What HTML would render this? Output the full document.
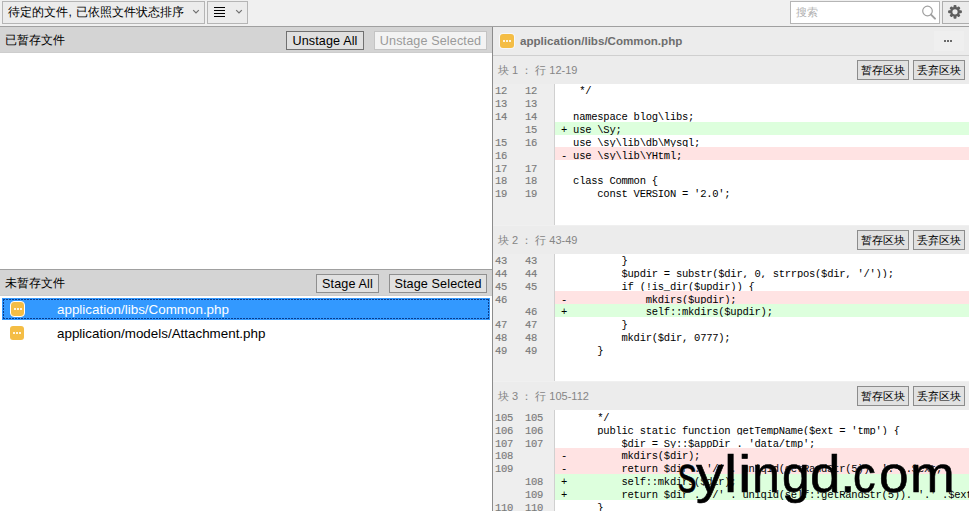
<!DOCTYPE html>
<html><head><meta charset="utf-8">
<style>
*{box-sizing:border-box;margin:0;padding:0}
html,body{width:969px;height:511px;overflow:hidden;background:#f0f0f0;font-family:"Liberation Sans",sans-serif;font-size:12px;color:#000}
.a{position:absolute}
.btn{position:absolute;background:#e1e1e1;border:1px solid #adadad;font-size:12.6px;line-height:18px;text-align:center;white-space:nowrap;letter-spacing:.12px}
.hl{position:absolute;background:#a0a0a0}
.ico{position:absolute;width:14px;height:14px;background:#f4bd45;border-radius:3px}
.ico i{position:absolute;top:6px;width:2px;height:2px;background:#fff4dc}
.code{position:absolute;left:493px;width:476px;font-family:"Liberation Mono",monospace;font-size:10.5px;letter-spacing:-.252px}
.row{position:relative;height:12.88px;line-height:13px;white-space:pre;background:#fff}
.row .g{position:absolute;left:0;top:0;width:62px;height:100%;background:#eeeeee;border-right:1px solid #d0d0d0}
.row .n1,.row .n2{position:absolute;top:2.3px;color:#7a7a7a;-webkit-text-stroke:.15px #7a7a7a}
.row .n1{left:2px}.row .n2{left:32px}
.row .t{position:absolute;left:68px;top:2.3px}
.row.add{background:#ddffdd}
.row.del{background:#ffe3e3}
.hh{position:absolute;left:493px;width:476px;height:28px;background:#ececec;z-index:2}
.hh .lbl{position:absolute;left:5px;top:7px;color:#858585;font-size:11px}
.hh .btn{top:4px;height:20px;width:52px;font-size:11px;line-height:18px;border-color:#8c8c8c;letter-spacing:0}
</style></head><body>
<!-- toolbar -->
<div class="a" style="left:0;top:0;width:969px;height:26px;background:#f0f0f0"></div>
<div class="btn" style="left:2px;top:1px;width:203px;height:23px;background:#ececec;border-color:#b5b5b5;text-align:left;padding-left:5px;line-height:21px;font-size:12px">待定的文件, 已依照文件状态排序</div>
<svg class="a" style="left:192px;top:9px" width="8" height="6" viewBox="0 0 8 6"><path d="M1.2 1.2 L4 4 L6.8 1.2" fill="none" stroke="#707070" stroke-width="1.2"/></svg>
<div class="btn" style="left:207px;top:1px;width:41px;height:23px;background:#ececec;border-color:#b5b5b5"></div>
<div class="a" style="left:214px;top:7px;width:11px;height:1.3px;background:#000"></div>
<div class="a" style="left:214px;top:10px;width:11px;height:1.3px;background:#000"></div>
<div class="a" style="left:214px;top:13px;width:11px;height:1.3px;background:#000"></div>
<div class="a" style="left:214px;top:16px;width:11px;height:1.3px;background:#000"></div>
<svg class="a" style="left:235px;top:9px" width="8" height="6" viewBox="0 0 8 6"><path d="M1.2 1.2 L4 4 L6.8 1.2" fill="none" stroke="#707070" stroke-width="1.2"/></svg>
<!-- search -->
<div class="a" style="left:790px;top:1px;width:150px;height:23px;background:#fff;border:1px solid #b5b5b5"></div>
<div class="a" style="left:796px;top:5px;color:#b0b0b0;font-size:11px">搜索</div>
<svg class="a" style="left:919px;top:3px" width="20" height="20" viewBox="0 0 20 20"><circle cx="8.5" cy="8" r="4.8" fill="none" stroke="#a0a0a0" stroke-width="1.2"/><path d="M12 11.6 L16 15.6" stroke="#a0a0a0" stroke-width="2" stroke-linecap="round"/></svg>
<div class="a" style="left:942px;top:1px;width:30px;height:23px;background:#ebebeb;border:1px solid #adadad"></div>
<svg class="a" style="left:946px;top:3px" width="18" height="18" viewBox="0 0 18 18">
<g fill="#5e5e5e" transform="translate(9,8.8)">
<circle r="4.8"/>
<rect x="-1.5" y="-6.9" width="3" height="13.8" rx="1"/>
<rect x="-6.9" y="-1.5" width="13.8" height="3" rx="1"/>
<rect x="-1.5" y="-6.5" width="3" height="13" rx="1" transform="rotate(45)"/>
<rect x="-1.5" y="-6.5" width="3" height="13" rx="1" transform="rotate(-45)"/>
<circle r="2.6" fill="#ebebeb"/>
</g></svg>
<div class="hl" style="left:0;top:26px;width:969px;height:1px"></div>

<!-- left panel -->
<div class="a" style="left:0;top:27px;width:492px;height:26px;background:#d4d4d4;border-bottom:1px solid #cdcdcd"></div>
<div class="a" style="left:5px;top:32px;font-size:12px">已暂存文件</div>
<div class="btn" style="left:286px;top:31px;width:78px;height:19px;border-color:#707070;background:#e0e0e0">Unstage All</div>
<div class="btn" style="left:374px;top:31px;width:113px;height:19px;border-color:#c4c4c4;background:#f3f3f3;color:#9a9a9a">Unstage Selected</div>
<div class="a" style="left:0;top:53px;width:492px;height:216px;background:#fff"></div>
<div class="a" style="left:0;top:269px;width:492px;height:1px;background:#a0a0a0"></div>
<div class="a" style="left:0;top:270px;width:492px;height:26px;background:#d4d4d4;border-bottom:1px solid #cdcdcd"></div>
<div class="a" style="left:5px;top:275px;font-size:12px">未暂存文件</div>
<div class="btn" style="left:316px;top:274px;width:63px;height:19px;border-color:#8f8f8f">Stage All</div>
<div class="btn" style="left:389px;top:274px;width:98px;height:19px;border-color:#8f8f8f">Stage Selected</div>
<div class="a" style="left:0;top:296px;width:492px;height:215px;background:#fff"></div>
<div class="a" style="left:2px;top:298px;width:488px;height:22px;background:#3399ff"></div><div class="a" style="left:3px;top:299px;width:486px;height:1px;background:repeating-linear-gradient(90deg,#0a3c8c 0 2px,transparent 2px 3px)"></div><div class="a" style="left:3px;top:318px;width:486px;height:1px;background:repeating-linear-gradient(90deg,#0a3c8c 0 2px,transparent 2px 3px)"></div><div class="a" style="left:3px;top:299px;width:1px;height:20px;background:repeating-linear-gradient(180deg,#0a3c8c 0 2px,transparent 2px 3px)"></div><div class="a" style="left:488px;top:299px;width:1px;height:20px;background:repeating-linear-gradient(180deg,#0a3c8c 0 2px,transparent 2px 3px)"></div>
<div class="ico" style="left:10px;top:301px;width:15px;height:16px;border:1px solid #fff;border-radius:4px"><i style="left:3px;top:6px"></i><i style="left:6px;top:6px"></i><i style="left:9px;top:6px"></i></div>
<div class="a" style="left:57px;top:302px;color:#fff;font-size:13.4px">application/libs/Common.php</div>
<div class="ico" style="left:10px;top:326px;width:14px;height:14px"><i style="left:3px"></i><i style="left:6px"></i><i style="left:9px"></i></div>
<div class="a" style="left:57px;top:326px;font-size:13.4px">application/models/Attachment.php</div>

<!-- divider -->
<div class="a" style="left:492px;top:27px;width:1px;height:484px;background:#8c8c8c"></div>

<!-- right panel -->
<div class="a" style="left:493px;top:27px;width:476px;height:28px;background:#ececec"></div>
<div class="ico" style="left:500px;top:34px;box-shadow:0 0 0 1px rgba(255,255,255,.6)"><i style="left:3px"></i><i style="left:6px"></i><i style="left:9px"></i></div>
<div class="a" style="left:520px;top:34px;font-weight:bold;color:#6e6e6e;font-size:11.6px">application/libs/Common.php</div>
<div class="a" style="left:934px;top:31px;width:30px;height:20px;background:#efefef"></div><div class="a" style="left:944px;top:40px;width:2px;height:2px;background:#6a6a6a"></div><div class="a" style="left:947px;top:40px;width:2px;height:2px;background:#6a6a6a"></div><div class="a" style="left:950px;top:40px;width:2px;height:2px;background:#6a6a6a"></div>
<div class="a" style="left:493px;top:55px;width:476px;height:1px;background:#cfcfcf"></div>

<div class="hh" style="top:56px"><div class="lbl">块 1 ： 行 12-19</div><div class="btn" style="left:364px">暂存区块</div><div class="btn" style="left:420px">丢弃区块</div></div>
<div class="code" style="top:83px">
<div class="row"><span class="g"></span><span class="n1">12</span><span class="n2">12</span><span class="t">   */</span></div>
<div class="row"><span class="g"></span><span class="n1">13</span><span class="n2">13</span><span class="t"></span></div>
<div class="row"><span class="g"></span><span class="n1">14</span><span class="n2">14</span><span class="t">  namespace blog\libs;</span></div>
<div class="row add"><span class="g"></span><span class="n1"></span><span class="n2">15</span><span class="t">+ use \Sy;</span></div>
<div class="row"><span class="g"></span><span class="n1">15</span><span class="n2">16</span><span class="t">  use \sy\lib\db\Mysql;</span></div>
<div class="row del"><span class="g"></span><span class="n1">16</span><span class="n2"></span><span class="t">- use \sy\lib\YHtml;</span></div>
<div class="row"><span class="g"></span><span class="n1">17</span><span class="n2">17</span><span class="t"></span></div>
<div class="row"><span class="g"></span><span class="n1">18</span><span class="n2">18</span><span class="t">  class Common {</span></div>
<div class="row"><span class="g"></span><span class="n1">19</span><span class="n2">19</span><span class="t">      const VERSION = '2.0';</span></div>
<div class="row"><span class="g"></span></div>
<div class="row"><span class="g"></span></div>
</div>

<div class="hh" style="top:225.68px"><div class="lbl">块 2 ： 行 43-49</div><div class="btn" style="left:364px">暂存区块</div><div class="btn" style="left:420px">丢弃区块</div></div>
<div class="code" style="top:252.68px">
<div class="row"><span class="g"></span><span class="n1">43</span><span class="n2">43</span><span class="t">          }</span></div>
<div class="row"><span class="g"></span><span class="n1">44</span><span class="n2">44</span><span class="t">          $updir = substr($dir, 0, strrpos($dir, '/'));</span></div>
<div class="row"><span class="g"></span><span class="n1">45</span><span class="n2">45</span><span class="t">          if (!is_dir($updir)) {</span></div>
<div class="row del"><span class="g"></span><span class="n1">46</span><span class="n2"></span><span class="t">-             mkdirs($updir);</span></div>
<div class="row add"><span class="g"></span><span class="n1"></span><span class="n2">46</span><span class="t">+             self::mkdirs($updir);</span></div>
<div class="row"><span class="g"></span><span class="n1">47</span><span class="n2">47</span><span class="t">          }</span></div>
<div class="row"><span class="g"></span><span class="n1">48</span><span class="n2">48</span><span class="t">          mkdir($dir, 0777);</span></div>
<div class="row"><span class="g"></span><span class="n1">49</span><span class="n2">49</span><span class="t">      }</span></div>
<div class="row"><span class="g"></span></div>
<div class="row"><span class="g"></span></div>
</div>

<div class="hh" style="top:382.48px"><div class="lbl">块 3 ： 行 105-112</div><div class="btn" style="left:364px">暂存区块</div><div class="btn" style="left:420px">丢弃区块</div></div>
<div class="code" style="top:409.48px">
<div class="row"><span class="g"></span><span class="n1">105</span><span class="n2">105</span><span class="t">      */</span></div>
<div class="row"><span class="g"></span><span class="n1">106</span><span class="n2">106</span><span class="t">      public static function getTempName($ext = 'tmp') {</span></div>
<div class="row"><span class="g"></span><span class="n1">107</span><span class="n2">107</span><span class="t">          $dir = Sy::$appDir . 'data/tmp';</span></div>
<div class="row del"><span class="g"></span><span class="n1">108</span><span class="n2"></span><span class="t">-         mkdirs($dir);</span></div>
<div class="row del"><span class="g"></span><span class="n1">109</span><span class="n2"></span><span class="t">-         return $dir . '/' . uniqid(getRandStr(5)). '.' .$ext;</span></div>
<div class="row add"><span class="g"></span><span class="n1"></span><span class="n2">108</span><span class="t">+         self::mkdirs($dir);</span></div>
<div class="row add"><span class="g"></span><span class="n1"></span><span class="n2">109</span><span class="t">+         return $dir . '/' . uniqid(self::getRandStr(5)). '.' .$ext;</span></div>
<div class="row"><span class="g"></span><span class="n1">110</span><span class="n2">110</span><span class="t">      }</span></div>
</div>

<!-- watermark -->
<div class="a" style="left:0;top:448px;width:969px;height:63px;font-size:52px;line-height:1;color:#000;-webkit-text-stroke:.6px #000;white-space:nowrap;z-index:5">
<span class="a" style="left:678.28px;top:0;transform:scaleX(0.717);transform-origin:0 0;text-shadow:0 0 1px #fff">s</span><span class="a" style="left:696.0px;top:0;transform:scaleX(1.065);transform-origin:0 0;text-shadow:0 0 1px #fff">y</span><span class="a" style="left:723.88px;top:0;transform:scaleX(1.14);transform-origin:0 0;text-shadow:0 0 1px #fff">l</span><span class="a" style="left:737.52px;top:0;transform:scaleX(1.16);transform-origin:0 0;text-shadow:0 0 1px #fff">i</span><span class="a" style="left:751.9px;top:0;transform:scaleX(0.965);transform-origin:0 0;text-shadow:0 0 1px #fff">n</span><span class="a" style="left:781.69px;top:0;transform:scaleX(0.954);transform-origin:0 0;text-shadow:0 0 1px #fff">g</span><span class="a" style="left:810.29px;top:0;transform:scaleX(1.054);transform-origin:0 0;text-shadow:0 0 1px #fff">d</span><span class="a" style="left:840.37px;top:0;transform:scaleX(1.083);transform-origin:0 0;text-shadow:0 0 1px #fff">.</span><span class="a" style="left:853.26px;top:0;transform:scaleX(0.87);transform-origin:0 0;text-shadow:0 0 1px #fff">c</span><span class="a" style="left:878.75px;top:0;transform:scaleX(1.024);transform-origin:0 0;text-shadow:0 0 1px #fff">o</span><span class="a" style="left:909.7px;top:0;transform:scaleX(1.032);transform-origin:0 0;text-shadow:0 0 1px #fff">m</span>
</div>
</body></html>
